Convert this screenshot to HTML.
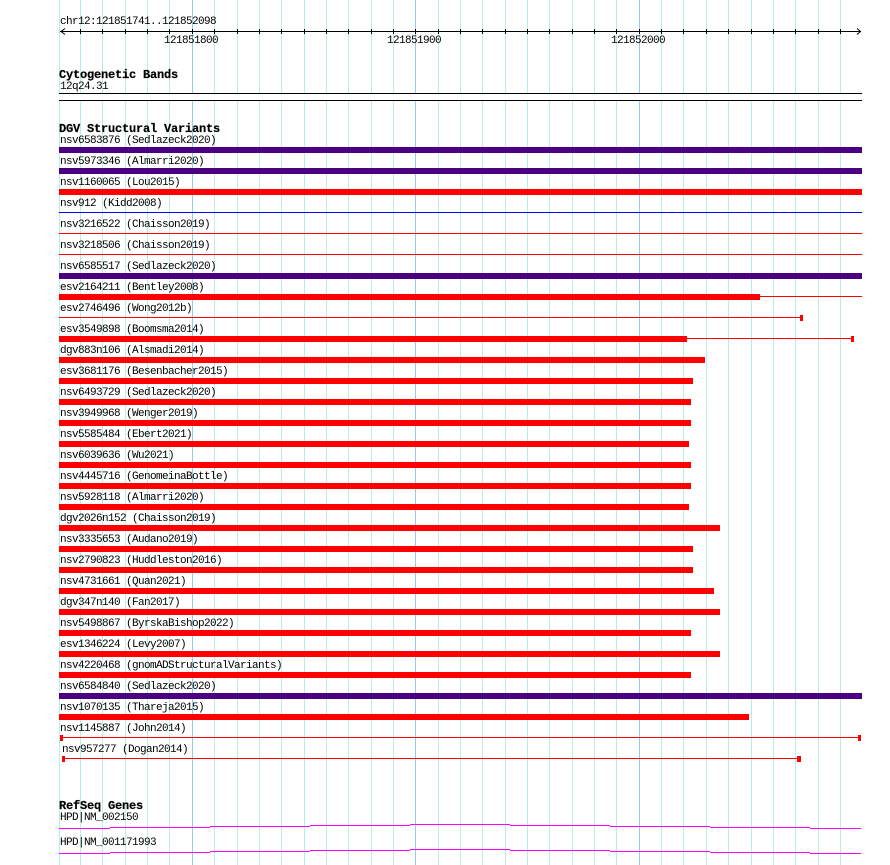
<!DOCTYPE html>
<html><head><meta charset="utf-8"><style>
html,body{margin:0;padding:0;background:#fff;width:890px;height:865px;overflow:hidden}
svg{display:block}
text{font-family:"Liberation Mono",monospace;font-size:11px;letter-spacing:-.6px;fill:#000;white-space:pre}
text.h{font-weight:bold;font-size:12px;letter-spacing:-.2px;stroke:#000;stroke-width:.2px}
</style></head><body>
<svg width="890" height="865" viewBox="0 0 890 865" xmlns="http://www.w3.org/2000/svg" shape-rendering="crispEdges">
<path stroke="#b4eeee" stroke-width="1" fill="none" d="M59.5 0V865M80.5 0V865M102.5 0V865M125.5 0V865M147.5 0V865M169.5 0V865M214.5 0V865M237.5 0V865M259.5 0V865M281.5 0V865M304.5 0V865M326.5 0V865M348.5 0V865M371.5 0V865M393.5 0V865M438.5 0V865M460.5 0V865M482.5 0V865M505.5 0V865M527.5 0V865M549.5 0V865M572.5 0V865M594.5 0V865M616.5 0V865M661.5 0V865M683.5 0V865M706.5 0V865M728.5 0V865M751.5 0V865M773.5 0V865M795.5 0V865M818.5 0V865M840.5 0V865"/>
<path stroke="#90cdee" stroke-width="1" fill="none" d="M192.5 0V865M415.5 0V865M639.5 0V865"/>
<rect x="59" y="93" width="803" height="8" fill="#fff"/>
<rect x="59" y="93" width="803" height="1" fill="#000"/>
<rect x="59" y="100" width="803" height="1" fill="#000"/>
<path stroke="#000" fill="none" d="M60 31.5H861M80.5 29V34M102.5 29V34M125.5 29V34M147.5 29V34M169.5 29V34M192.5 29V34M214.5 29V34M237.5 29V34M259.5 29V34M281.5 29V34M304.5 29V34M326.5 29V34M348.5 29V34M371.5 29V34M393.5 29V34M415.5 29V34M438.5 29V34M460.5 29V34M482.5 29V34M505.5 29V34M527.5 29V34M549.5 29V34M572.5 29V34M594.5 29V34M616.5 29V34M639.5 29V34M661.5 29V34M683.5 29V34M706.5 29V34M728.5 29V34M751.5 29V34M773.5 29V34M795.5 29V34M818.5 29V34M840.5 29V34"/>
<path stroke="#000" fill="none" shape-rendering="auto" d="M65 28.5L61 31.5L65 34.5M857 28.5L860.5 31.5L857 34.5"/>
<text x="60" y="24">chr12:121851741..121852098</text>
<text x="164" y="43">121851800</text>
<text x="387" y="43">121851900</text>
<text x="611" y="43">121852000</text>
<text class="h" x="59" y="78">Cytogenetic Bands</text>
<text x="60" y="89">12q24.31</text>
<text class="h" x="59" y="132">DGV Structural Variants</text>

<g fill="#4b0082">
<rect x="59" y="147" width="803" height="6"/>
<rect x="59" y="168" width="803" height="6"/>
<rect x="59" y="273" width="803" height="6"/>
<rect x="59" y="693" width="803" height="6"/>
</g>
<rect x="59" y="212" width="803" height="1" fill="#00f"/>
<g fill="#f00">
<rect x="59" y="189" width="803" height="6"/>
<rect x="59" y="233" width="803" height="1"/>
<rect x="59" y="254" width="803" height="1"/>
<rect x="59" y="294" width="701" height="6"/>
<rect x="760" y="296" width="102" height="1"/>
<rect x="59" y="317" width="741" height="1"/>
<rect x="800" y="315" width="3" height="6"/>
<rect x="59" y="336" width="628" height="6"/>
<rect x="687" y="338" width="164" height="1"/>
<rect x="851" y="336" width="3" height="6"/>
<rect x="59" y="357" width="646" height="6"/>
<rect x="59" y="378" width="634" height="6"/>
<rect x="59" y="399" width="632" height="6"/>
<rect x="59" y="420" width="632" height="6"/>
<rect x="59" y="441" width="630" height="6"/>
<rect x="59" y="462" width="632" height="6"/>
<rect x="59" y="483" width="632" height="6"/>
<rect x="59" y="504" width="630" height="6"/>
<rect x="59" y="525" width="661" height="6"/>
<rect x="59" y="546" width="634" height="6"/>
<rect x="59" y="567" width="634" height="6"/>
<rect x="59" y="588" width="655" height="6"/>
<rect x="59" y="609" width="661" height="6"/>
<rect x="59" y="630" width="632" height="6"/>
<rect x="59" y="651" width="661" height="6"/>
<rect x="59" y="672" width="632" height="6"/>
<rect x="59" y="714" width="690" height="6"/>
<rect x="60" y="735" width="3" height="6"/>
<rect x="63" y="737" width="795" height="1"/>
<rect x="858" y="735" width="3" height="6"/>
<rect x="62" y="756" width="3" height="6"/>
<rect x="65" y="758" width="732" height="1"/>
<rect x="797" y="756" width="4" height="6"/>
</g>

<text x="60" y="143">nsv6583876 (Sedlazeck2020)</text>
<text x="60" y="164">nsv5973346 (Almarri2020)</text>
<text x="60" y="185">nsv1160065 (Lou2015)</text>
<text x="60" y="206">nsv912 (Kidd2008)</text>
<text x="60" y="227">nsv3216522 (Chaisson2019)</text>
<text x="60" y="248">nsv3218506 (Chaisson2019)</text>
<text x="60" y="269">nsv6585517 (Sedlazeck2020)</text>
<text x="60" y="290">esv2164211 (Bentley2008)</text>
<text x="60" y="311">esv2746496 (Wong2012b)</text>
<text x="60" y="332">esv3549898 (Boomsma2014)</text>
<text x="60" y="353">dgv883n106 (Alsmadi2014)</text>
<text x="60" y="374">esv3681176 (Besenbacher2015)</text>
<text x="60" y="395">nsv6493729 (Sedlazeck2020)</text>
<text x="60" y="416">nsv3949968 (Wenger2019)</text>
<text x="60" y="437">nsv5585484 (Ebert2021)</text>
<text x="60" y="458">nsv6039636 (Wu2021)</text>
<text x="60" y="479">nsv4445716 (GenomeinaBottle)</text>
<text x="60" y="500">nsv5928118 (Almarri2020)</text>
<text x="60" y="521">dgv2026n152 (Chaisson2019)</text>
<text x="60" y="542">nsv3335653 (Audano2019)</text>
<text x="60" y="563">nsv2790823 (Huddleston2016)</text>
<text x="60" y="584">nsv4731661 (Quan2021)</text>
<text x="60" y="605">dgv347n140 (Fan2017)</text>
<text x="60" y="626">nsv5498867 (ByrskaBishop2022)</text>
<text x="60" y="647">esv1346224 (Levy2007)</text>
<text x="60" y="668">nsv4220468 (gnomADStructuralVariants)</text>
<text x="60" y="689">nsv6584840 (Sedlazeck2020)</text>
<text x="60" y="710">nsv1070135 (Thareja2015)</text>
<text x="60" y="731">nsv1145887 (John2014)</text>
<text x="62" y="752">nsv957277 (Dogan2014)</text>

<text class="h" x="59" y="809">RefSeq Genes</text>
<text x="60" y="820">HPD|NM_002150</text>
<text x="60" y="845">HPD|NM_001171993</text>
<path stroke="#f0f" stroke-width="1" fill="none" d="M59 828.5H110M110 827.5H210M210 826.5H310M310 825.5H410M410 824.5H510M510 825.5H610M610 826.5H710M710 827.5H810M810 828.5H861"/>
<path stroke="#f0f" stroke-width="1" fill="none" d="M59 853.5H110M110 852.5H210M210 851.5H310M310 850.5H410M410 849.5H510M510 850.5H610M610 851.5H710M710 852.5H810M810 853.5H861"/>
</svg>
</body></html>
